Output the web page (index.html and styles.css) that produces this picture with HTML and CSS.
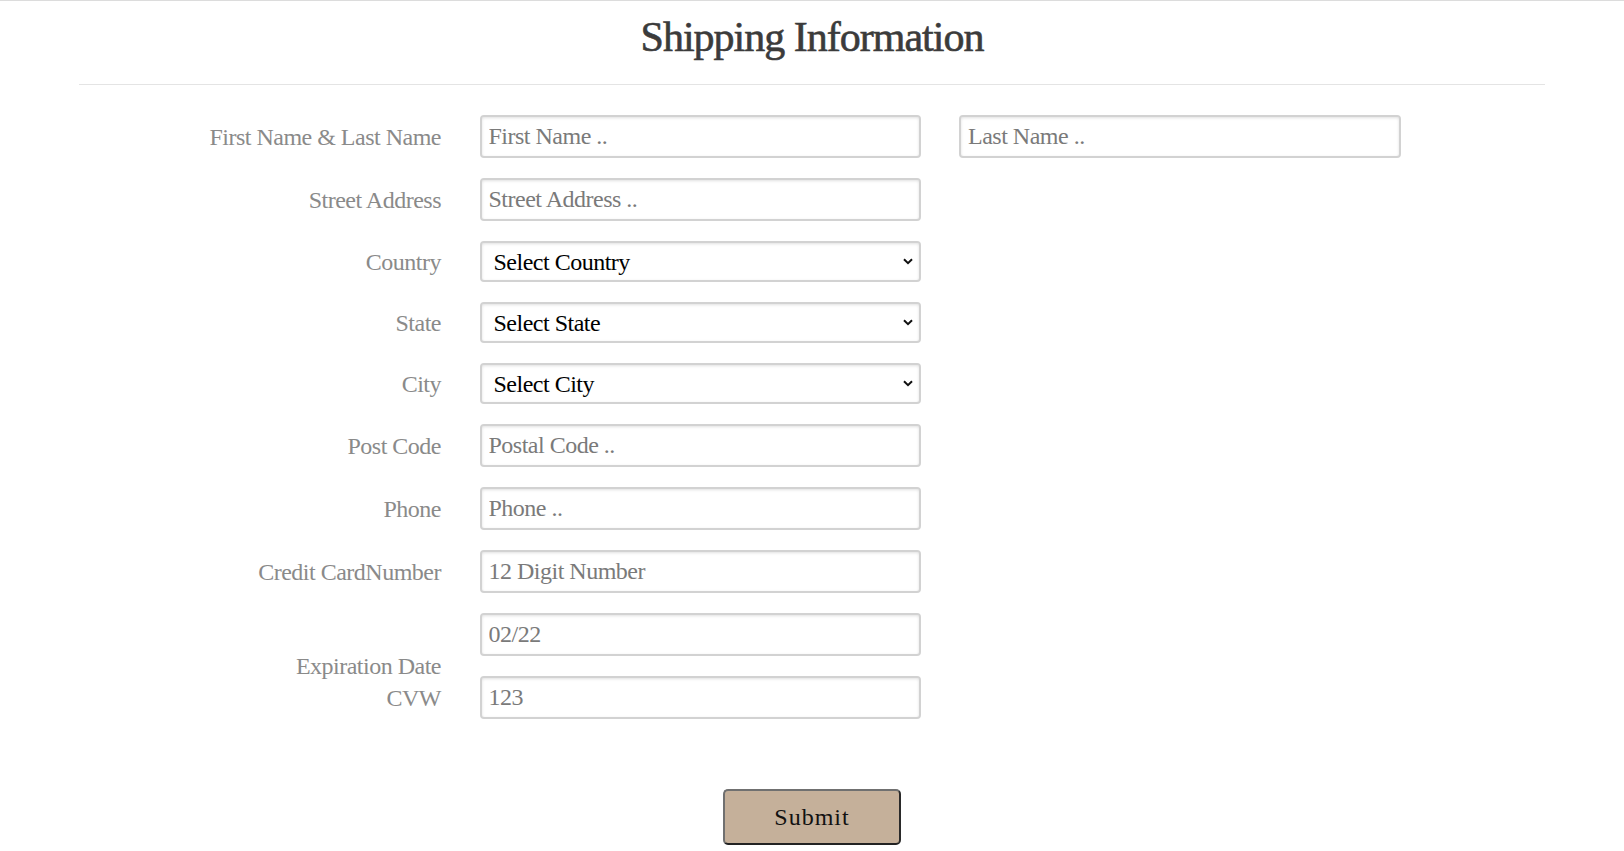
FILE: index.html
```html
<!DOCTYPE html>
<html lang="en">
<head>
<meta charset="utf-8">
<title>Shipping Information</title>
<link rel="stylesheet" href="styles.css">
</head>
<body>
<div class="page">
  <header class="header">
    <h1 class="title">Shipping Information</h1>
  </header>
  <div class="container">
    <hr class="rule">
    <form class="form">
      <label class="label">First Name &amp; Last Name</label>
      <input class="field" type="text" placeholder="First Name ..">
      <input class="field" type="text" placeholder="Last Name ..">

      <label class="label">Street Address</label>
      <input class="field" type="text" placeholder="Street Address ..">
      <div></div>

      <label class="label">Country</label>
      <select class="select"><option>Select Country</option></select>
      <div></div>

      <label class="label">State</label>
      <select class="select"><option>Select State</option></select>
      <div></div>

      <label class="label">City</label>
      <select class="select"><option>Select City</option></select>
      <div></div>

      <label class="label">Post Code</label>
      <input class="field" type="text" placeholder="Postal Code ..">
      <div></div>

      <label class="label">Phone</label>
      <input class="field" type="text" placeholder="Phone ..">
      <div></div>

      <label class="label">Credit CardNumber</label>
      <input class="field" type="text" placeholder="12 Digit Number">
      <div></div>

      <label class="label label-multi">Expiration Date<br>CVW</label>
      <div class="stack">
        <input class="field" type="text" placeholder="02/22">
        <input class="field" type="text" placeholder="123">
      </div>
      <div></div>
    </form>
    <div class="actions">
      <button class="submit" type="button">Submit</button>
    </div>
  </div>
</div>
</body>
</html>
```

FILE: styles.css
```css
html, body {
  margin: 0;
  padding: 0;
  background: #ffffff;
}

body {
  font-family: "Liberation Serif", "Times New Roman", serif;
  color: #333;
}

.page {
  border-top: 1px solid #dcdcdc;
}

.header {
  padding-top: 12px;
}

.title {
  margin: 0;
  text-align: center;
  font-size: 42px;
  line-height: 48px;
  font-weight: normal;
  letter-spacing: -1px;
  -webkit-text-stroke: 0.6px #3b3b3b;
  color: #3b3b3b;
}

.container {
  width: 1466px;
  margin: 0 auto;
}

.rule {
  margin: 23px 0 0 0;
  border: 0;
  border-top: 1px solid #e4e4e4;
  height: 0;
}

.form {
  margin-top: 30px;
  display: grid;
  grid-template-columns: 362px 441px 442px;
  column-gap: 38.5px;
  row-gap: 20px;
  align-items: center;
}

.label {
  text-align: right;
  font-size: 24px;
  letter-spacing: -0.5px;
  line-height: 32px;
  color: #8a8a8a;
}

.label-multi {
  align-self: start;
  padding-top: 37px;
}

.field,
.select {
  box-sizing: border-box;
  width: 100%;
  font-family: "Liberation Serif", "Times New Roman", serif;
  font-size: 24px;
  letter-spacing: -0.5px;
  border: 2px solid #d2d2d2;
  border-radius: 4px;
  box-shadow: inset 0 1px 3px rgba(0, 0, 0, 0.12);
  background-color: #fff;
  margin: 0;
  outline: none;
}

.field {
  height: 43px;
  padding: 0 7px;
  color: #333;
}

.field::placeholder {
  color: #7a7a7a;
  opacity: 1;
}

.select {
  -webkit-appearance: none;
  appearance: none;
  height: 41px;
  padding: 0 30px 0 12px;
  color: #000;
  background-image: url("data:image/svg+xml;utf8,<svg xmlns='http://www.w3.org/2000/svg' width='10' height='7' viewBox='0 0 10 7'><path d='M1 1.2 L5 5.2 L9 1.2' fill='none' stroke='%23111' stroke-width='2'/></svg>");
  background-repeat: no-repeat;
  background-position: right 6px center;
  background-size: 10px 7px;
}

.stack {
  display: flex;
  flex-direction: column;
  gap: 20px;
}

.actions {
  display: flex;
  justify-content: center;
  margin-top: 70px;
}

.submit {
  width: 178px;
  height: 56px;
  background: #c5b09a;
  border: 2px solid;
  border-color: #707070 #2a2a2a #222 #707070;
  border-radius: 5px;
  font-family: "Liberation Serif", "Times New Roman", serif;
  font-size: 24px;
  letter-spacing: 1px;
  color: #111;
  cursor: pointer;
}
```
